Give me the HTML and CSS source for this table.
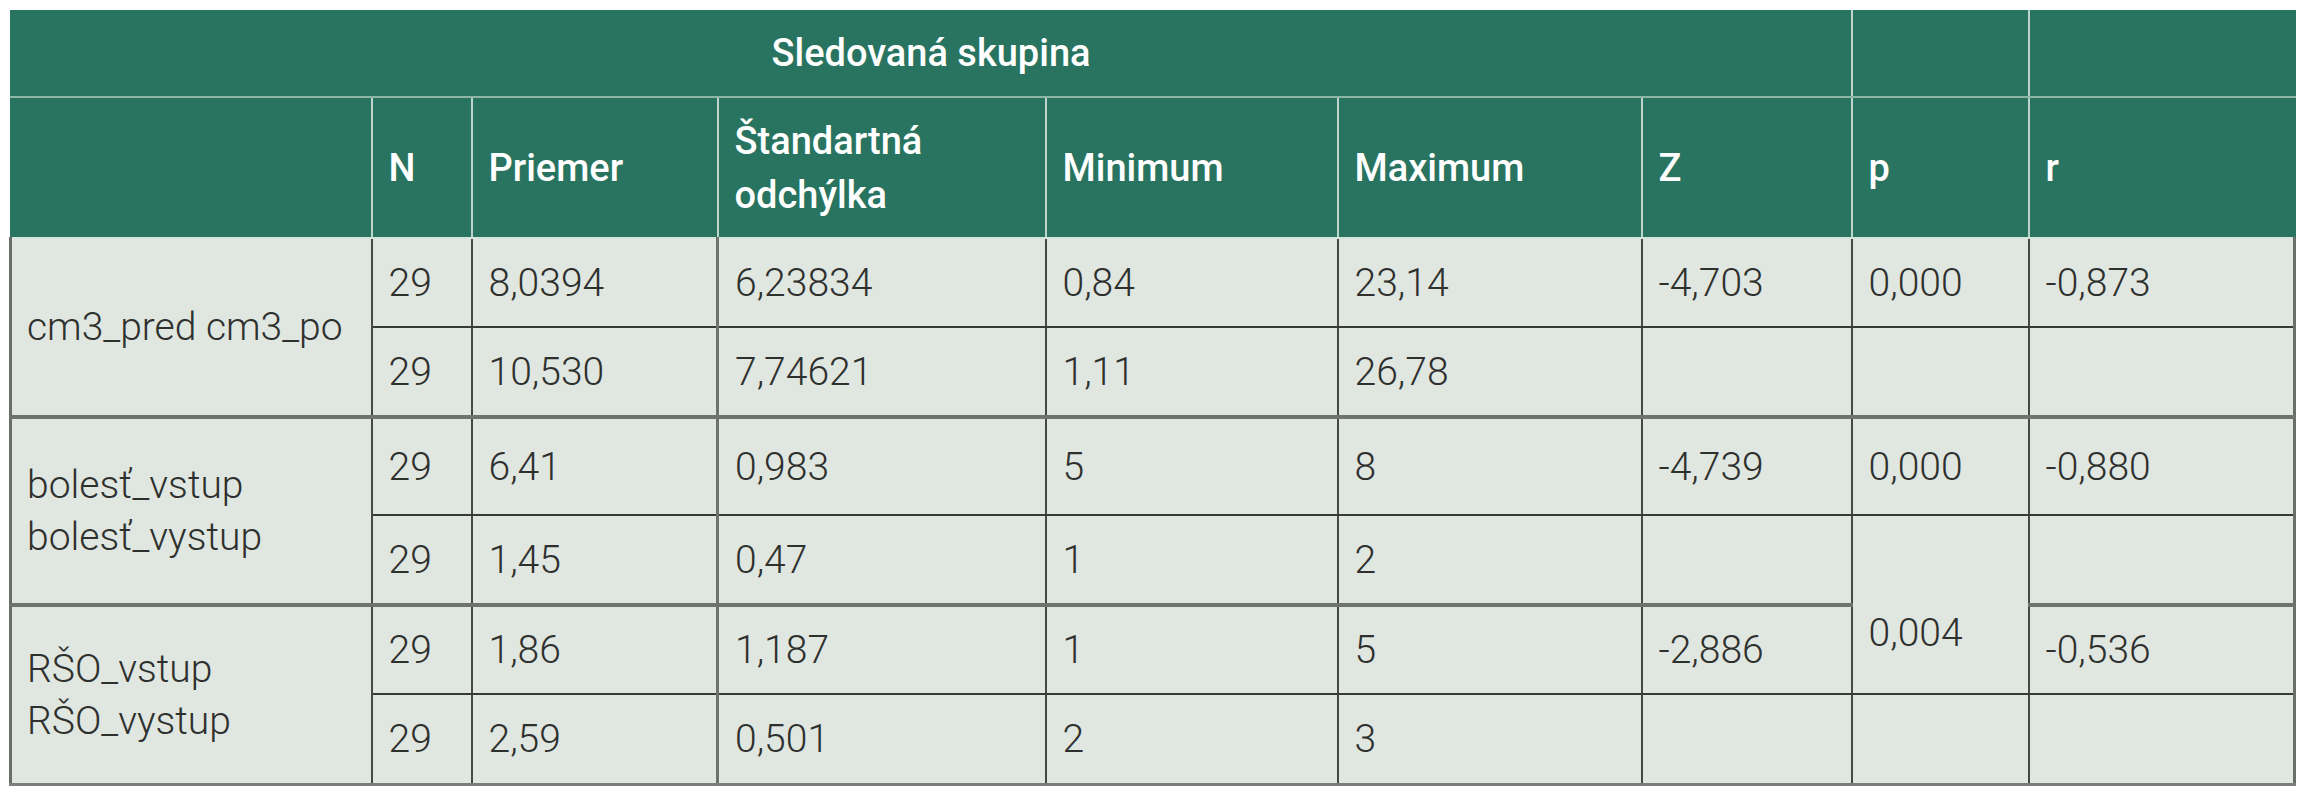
FILE: index.html
```html
<!DOCTYPE html>
<html lang="sk">
<head>
<meta charset="utf-8">
<title>Sledovaná skupina</title>
<link rel="stylesheet" href="styles.css">
</head>
<body>
<div class="wrap">
<table class="stats">
  <colgroup>
    <col class="c-label">
    <col class="c-n">
    <col class="c-mean">
    <col class="c-sd">
    <col class="c-min">
    <col class="c-max">
    <col class="c-z">
    <col class="c-p">
    <col class="c-r">
  </colgroup>
  <thead>
    <tr class="h1">
      <th colspan="7" class="title">Sledovaná skupina</th>
      <th></th>
      <th class="last"></th>
    </tr>
    <tr class="h2">
      <th class="first"></th>
      <th>N</th>
      <th>Priemer</th>
      <th>Štandartná<br>odchýlka</th>
      <th>Minimum</th>
      <th>Maximum</th>
      <th>Z</th>
      <th>p</th>
      <th class="last">r</th>
    </tr>
  </thead>
  <tbody>
    <tr class="b1 top">
      <td rowspan="2" class="label">cm3_pred cm3_po</td>
      <td>29</td><td>8,0394</td><td class="sd">6,23834</td><td>0,84</td><td>23,14</td><td>-4,703</td><td>0,000</td><td>-0,873</td>
    </tr>
    <tr class="b2">
      <td>29</td><td>10,530</td><td class="sd">7,74621</td><td>1,11</td><td>26,78</td><td></td><td></td><td></td>
    </tr>
    <tr class="b3 grp">
      <td rowspan="2" class="label">bolesť_vstup<br>bolesť_vystup</td>
      <td>29</td><td>6,41</td><td class="sd">0,983</td><td>5</td><td>8</td><td>-4,739</td><td>0,000</td><td>-0,880</td>
    </tr>
    <tr class="b4">
      <td>29</td><td>1,45</td><td class="sd">0,47</td><td>1</td><td>2</td><td></td><td rowspan="2" class="pmerge">0,004</td><td></td>
    </tr>
    <tr class="b5 grp">
      <td rowspan="2" class="label">RŠO_vstup<br>RŠO_vystup</td>
      <td>29</td><td>1,86</td><td class="sd">1,187</td><td>1</td><td>5</td><td>-2,886</td><td>-0,536</td>
    </tr>
    <tr class="b6 bottom">
      <td>29</td><td>2,59</td><td class="sd">0,501</td><td>2</td><td>3</td><td></td><td></td><td></td>
    </tr>
  </tbody>
</table>
</div>
</body>
</html>
```
FILE: styles.css
```css
html, body {
  margin: 0;
  padding: 0;
  background: #ffffff;
}

body {
  font-family: Roboto, "Liberation Sans", sans-serif;
}

.wrap {
  padding: 10px 9px 0 9px;
}

.stats {
  border-collapse: collapse;
  table-layout: fixed;
  width: 2284px;
}

.c-label { width: 361px; }
.c-n { width: 100px; }
.c-mean { width: 246px; }
.c-sd { width: 328px; }
.c-min { width: 292px; }
.c-max { width: 304px; }
.c-z { width: 210px; }
.c-p { width: 177px; }
.c-r { width: 266px; }

/* header */
.stats th {
  background: #287460;
  color: #ffffff;
  font-weight: 500;
  font-size: 38px;
  line-height: 54px;
  text-align: left;
  vertical-align: middle;
  padding: 0 16px;
  border: 2px solid #bcd4ca;
  border-top: 0;
}

.stats th.title {
  text-align: center;
  border-left-color: #287460;
}

.stats th.first {
  border-left-color: #287460;
}

.stats th.last {
  border-right-color: #287460;
}

.stats tr.h1 { height: 87px; }
.stats tr.h2 { height: 141px; }

.stats tr.h1 th {
  border-bottom: 2px solid #8fb6a6;
}

.stats tr.h2 th {
  border-bottom: 2px solid #d6e4de;
}

/* body */
.stats td {
  background: #e0e6e0;
  color: #2e302e;
  font-weight: 300;
  font-size: 39px;
  line-height: 52px;
  text-align: left;
  vertical-align: middle;
  padding: 0 16px;
  border-left: 2px solid #454845;
  border-right: 2px solid #454845;
  border-top: 2px solid #383a38;
  border-bottom: 2px solid #383a38;
}

.stats td.sd {
  border-left: 3px solid #6d726d;
}

.stats td.label {
  padding-left: 15px;
  border-left: 3px solid #6a6e6a;
}

.stats tr.top td {
  border-top: 2px solid #d6e4de;
}

.stats tr.grp td {
  border-top: 4px solid #6e736e;
}

.stats tr.bottom td,
.stats tr.b5 td.label {
  border-bottom: 3px solid #7b7f7b;
}

.stats td.pmerge {
  padding-top: 56px;
}

.stats tr.b1 { height: 89px; }
.stats tr.b2 { height: 90px; }
.stats tr.b3 { height: 98px; }
.stats tr.b4 { height: 90px; }
.stats tr.b5 { height: 89px; }
.stats tr.b6 { height: 90px; }

.stats tbody tr td:last-child {
  border-right: 3px solid #6a6e6a;
}
```
